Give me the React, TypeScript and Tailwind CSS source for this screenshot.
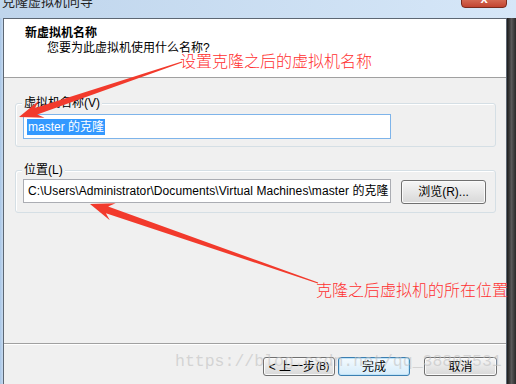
import React from "react";

const F = "font-['Liberation_Sans','Noto_Sans_CJK_SC',sans-serif]";

function Btn({ children, w, primary }: { children: React.ReactNode; w: string; primary?: boolean }) {
  return (
    <div
      className={`${w} h-[19px] flex items-center justify-center rounded-[3px] border text-[12px] leading-none text-black ${
        primary
          ? "border-[#3c7fb1] bg-gradient-to-b from-[#f4fafe] to-[#d6ecfa] shadow-[inset_0_0_0_1px_#bfe3f8]"
          : "border-[#707070] bg-gradient-to-b from-[#f6f6f6] to-[#d8d8d8] shadow-[inset_0_0_0_1px_#fbfbfb]"
      }`}
    >
      {children}
    </div>
  );
}

export default function App() {
  return (
    <div className={`relative w-[516px] h-[384px] overflow-hidden bg-[#f0f0f0] flex flex-col ${F}`}>
      {/* title bar */}
      <div className="h-[18px] shrink-0 bg-gradient-to-r from-[#bfd5ec] to-[#d6e7f8] flex items-start relative">
        <div className="-mt-[6px] ml-[2px] text-[13px] leading-[16px] text-[#222]">克隆虚拟机向导</div>
        <div className="absolute left-[461px] top-[-6px] w-[46px] h-[14px] rounded-b-[4px] border border-[#7a2a1c] bg-gradient-to-b from-[#e0806a] to-[#c24430] flex justify-center">
          <span className="text-white text-[13px] font-bold leading-[10px] -mt-[1px]">x</span>
        </div>
      </div>
      <div className="flex flex-1 min-h-0">
        <div className="w-[3px] bg-gradient-to-r from-[#a9c6e6] to-[#c6daf0] shrink-0" />
        {/* client */}
        <div className="flex-1 flex flex-col border-t border-l border-r border-[#5d6773] min-w-0">
          <div className="h-[59px] shrink-0 bg-white border-b border-[#a0a0a0] pt-[7px]">
            <div className="pl-[21px] text-[12px] leading-[15px] font-bold text-black">新虚拟机名称</div>
            <div className="pl-[43px] text-[12px] leading-[15px] text-black">您要为此虚拟机使用什么名称?</div>
          </div>
          <div className="flex-1 flex flex-col">
            <div className="relative mt-[25px] ml-[11px] mr-[10px] h-[44px] rounded-[3px] border border-[#d5dfe5] shadow-[inset_1px_1px_0_#fff]">
              <div className="absolute left-[6px] -top-[9px] px-[2px] bg-[#f0f0f0] text-[12px] leading-[16px] text-black">虚拟机名称(V)</div>
              <div className="absolute left-[7px] top-[10px] w-[368px] h-[25px] border border-[#7eb4ea] bg-white flex items-center pl-[3px]">
                <span className="bg-[#3399ff] text-white text-[12px] leading-[16px] px-[1px]">master 的克隆</span>
              </div>
            </div>
            <div className="relative mt-[23px] ml-[11px] mr-[10px] h-[43px] rounded-[3px] border border-[#d5dfe5] shadow-[inset_1px_1px_0_#fff]">
              <div className="absolute left-[6px] -top-[9px] px-[2px] bg-[#f0f0f0] text-[12px] leading-[16px] text-black">位置(L)</div>
              <div className="absolute left-[7px] top-[8px] w-[368px] h-[24px] border border-[#abadb3] bg-white flex items-center pl-[4px] overflow-hidden whitespace-nowrap">
                <span className="text-[12px] leading-[16px] text-black tracking-[0.08px]">C:\Users\Administrator\Documents\Virtual Machines\master 的克隆</span>
              </div>
              <div className="absolute left-[385px] top-[9px]">
                <Btn w="w-[85px] !h-[24px]">浏览(R)...</Btn>
              </div>
            </div>
            <div className="flex-1" />
            <div className="h-[2px] border-t border-[#a0a0a0] bg-white shrink-0" />
            <div className="h-[39px] shrink-0 flex justify-end items-start pt-[12px] pr-[9px]">
              <Btn w="w-[72px]">
                <span>&lt; 上一步</span>
                <span className="text-[10px] ml-[1px]">(B)</span>
              </Btn>
              <div className="w-[3px]" />
              <Btn w="w-[72px]" primary>完成</Btn>
              <div className="w-[14px]" />
              <Btn w="w-[73px]">取消</Btn>
            </div>
          </div>
        </div>
        <div className="w-[9px] shrink-0 bg-gradient-to-r from-[#1c1c1c] via-[#5a5a5a] to-[#2a2a2a]" />
      </div>

      {/* annotations */}
      <div className="absolute left-[180px] top-[50px] text-[16px] leading-[20px] text-[#ff3030] whitespace-nowrap font-['Noto_Sans_CJK_SC',sans-serif] font-light">
        设置克隆之后的虚拟机名称
      </div>
      <div className="absolute left-[316px] top-[279px] text-[16px] leading-[20px] text-[#ff3030] whitespace-nowrap font-['Noto_Sans_CJK_SC',sans-serif] font-light">
        克隆之后虚拟机的所在位置
      </div>
      <svg className="absolute inset-0 pointer-events-none" width="516" height="384" viewBox="0 0 516 384">
        <polygon
          fill="#f23a2c"
          points="19,117 44.6,117.8 37.2,114.5 182.2,62.5 181.8,61.5 35,107.9 38.8,100.8"
        />
        <polygon
          fill="#f23a2c"
          points="90,204 109.8,220.3 105.9,213.2 317.8,283.5 318.2,282.5 108.1,206.6 115.6,203.3"
        />
      </svg>
      <div className="absolute left-[175px] top-[352px] text-[16.5px] leading-[20px] whitespace-nowrap text-[#c0c0c0]/60 font-['Liberation_Mono',monospace] pointer-events-none">
        https://blog.csdn.net/qq_38807531
      </div>
    </div>
  );
}
